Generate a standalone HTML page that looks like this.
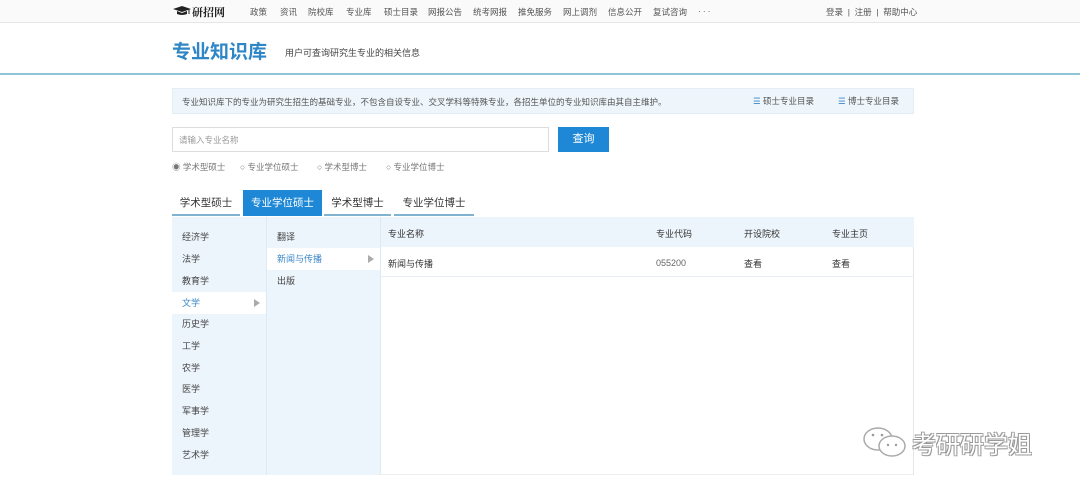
<!DOCTYPE html>
<html><head><meta charset="utf-8"><style>
*{margin:0;padding:0;box-sizing:border-box}
body{width:1080px;height:490px;background:#fff;font-family:"Liberation Sans","Noto Sans CJK SC",sans-serif;color:#333;position:relative;overflow:hidden;font-size:9px}
.a{position:absolute;white-space:nowrap}
.nav{position:absolute;left:0;top:0;width:1080px;height:23px;background:#fafafa;border-bottom:1px solid #e6e6e6}
.nav span{position:absolute;top:6px;font-size:8.5px;color:#555}
.lc div,.mc div{position:absolute;left:0;height:22px;line-height:22px;padding-left:10px;font-size:9px;color:#444;width:100%}
.sel{background:#fff;color:#3a86c8!important}
.tri{position:absolute;right:6px;top:7px;width:0;height:0;border-left:6px solid #aaa;border-top:4px solid transparent;border-bottom:4px solid transparent}
.r{position:absolute;top:161px;font-size:8.5px;color:#777}
.tab{position:absolute;top:191px;height:25px;border-bottom:2px solid #7fb3cf;font-size:10.5px;line-height:24px;text-align:center;color:#333}
</style></head><body>
<div class="nav">
<svg class="a" style="left:173px;top:6px" width="18" height="10" viewBox="0 0 18 10"><path d="M0 3 L9 0 L18 3 L9 6Z" fill="#222"/><path d="M4 5 L4 8 Q9 10 14 8 L14 5 L9 7Z" fill="#222"/><path d="M16 3.5 L16 8" stroke="#222"/></svg>
<span style="left:192px;top:4px;font-size:11px;font-weight:bold;color:#222;font-family:'Noto Serif CJK SC',serif">研招网</span>
<span style="left:250px">政策</span><span style="left:280px">资讯</span><span style="left:308px">院校库</span><span style="left:346px">专业库</span><span style="left:384px">硕士目录</span><span style="left:428px">网报公告</span><span style="left:473px">统考网报</span><span style="left:518px">推免服务</span><span style="left:563px">网上调剂</span><span style="left:608px">信息公开</span><span style="left:653px">复试咨询</span><span style="left:698px;letter-spacing:2px">···</span>
<span style="left:826px">登录 &nbsp;|&nbsp; 注册 &nbsp;|&nbsp; 帮助中心</span>
</div>
<div class="a" style="left:172px;top:37px;font-size:19px;font-weight:bold;color:#2e86c6">专业知识库</div>
<div class="a" style="left:285px;top:46px;font-size:9px;color:#444">用户可查询研究生专业的相关信息</div>
<div class="a" style="left:0;top:73px;width:1080px;height:2px;background:#8fc3d6"></div>
<div class="a" style="left:172px;top:88px;width:742px;height:26px;background:#eef6fb;border:1px solid #e2edf4"></div>
<div class="a" style="left:182px;top:96px;font-size:8.5px;color:#555">专业知识库下的专业为研究生招生的基础专业，不包含自设专业、交叉学科等特殊专业，各招生单位的专业知识库由其自主维护。</div>
<div class="a" style="left:753px;top:95px;font-size:8.5px;color:#555"><span style="color:#3a86c8">☰</span> 硕士专业目录</div>
<div class="a" style="left:838px;top:95px;font-size:8.5px;color:#555"><span style="color:#3a86c8">☰</span> 博士专业目录</div>
<div class="a" style="left:172px;top:127px;width:377px;height:25px;border:1px solid #ddd"></div>
<div class="a" style="left:179px;top:134px;font-size:8.5px;color:#999">请输入专业名称</div>
<div class="a" style="left:558px;top:127px;width:51px;height:25px;background:#1e88d6;color:#fff;font-size:11px;text-align:center;line-height:25px">查询</div>
<div class="r" style="left:172px">◉ 学术型硕士</div>
<div class="r" style="left:240px">○ 专业学位硕士</div>
<div class="r" style="left:317px">○ 学术型博士</div>
<div class="r" style="left:386px">○ 专业学位博士</div>
<div class="tab" style="left:172px;width:68px">学术型硕士</div>
<div class="a" style="left:243px;top:190px;width:79px;height:26px;background:#1e88d6;color:#fff;font-size:10.5px;line-height:26px;text-align:center">专业学位硕士</div>
<div class="tab" style="left:324px;width:67px">学术型博士</div>
<div class="tab" style="left:394px;width:80px">专业学位博士</div>
<div class="a lc" style="left:172px;top:217px;width:95px;height:258px;background:#edf5fc;border-right:1px solid #dde9f3">
<div style="top:9px">经济学</div><div style="top:31px">法学</div><div style="top:53px">教育学</div><div class="sel" style="top:75px">文学<i class="tri"></i></div><div style="top:96px">历史学</div><div style="top:118px">工学</div><div style="top:140px">农学</div><div style="top:161px">医学</div><div style="top:183px">军事学</div><div style="top:205px">管理学</div><div style="top:227px">艺术学</div>
</div>
<div class="a mc" style="left:267px;top:217px;width:114px;height:258px;background:#edf5fc;border-right:1px solid #dde9f3">
<div style="top:9px">翻译</div><div class="sel" style="top:31px">新闻与传播<i class="tri"></i></div><div style="top:53px">出版</div>
</div>
<div class="a" style="left:381px;top:217px;width:533px;height:258px;border-right:1px solid #e6e6e6;border-bottom:1px solid #eee"></div>
<div class="a" style="left:381px;top:217px;width:533px;height:30px;background:#edf5fc"></div>
<div class="a" style="left:381px;top:276px;width:533px;height:1px;background:#e8eef3"></div>
<div class="a" style="left:388px;top:227px;font-size:9px">专业名称</div>
<div class="a" style="left:656px;top:227px;font-size:9px">专业代码</div>
<div class="a" style="left:744px;top:227px;font-size:9px">开设院校</div>
<div class="a" style="left:832px;top:227px;font-size:9px">专业主页</div>
<div class="a" style="left:388px;top:257px;font-size:9px">新闻与传播</div>
<div class="a" style="left:656px;top:257px;font-size:9px;line-height:12px;color:#666">055200</div>
<div class="a" style="left:744px;top:257px;font-size:9px">查看</div>
<div class="a" style="left:832px;top:257px;font-size:9px">查看</div>
<svg class="a" style="left:862px;top:426px" width="48" height="34" viewBox="0 0 48 34"><ellipse cx="16" cy="13" rx="14" ry="11" fill="#fff" stroke="#aaa" stroke-width="1.5"/><ellipse cx="30" cy="20" rx="13" ry="10" fill="#fff" stroke="#aaa" stroke-width="1.5"/><circle cx="11" cy="9" r="1.3" fill="#999"/><circle cx="20" cy="9" r="1.3" fill="#999"/><circle cx="26" cy="19" r="1.2" fill="#999"/><circle cx="34" cy="19" r="1.2" fill="#999"/></svg>
<div class="a" style="left:912px;top:425px;font-size:24px;color:#fff;text-shadow:-1px -1px 0 #999,1px 1px 0 #999,1px -1px 0 #aaa,-1px 1px 0 #aaa">考研研学姐</div>
</body></html>
